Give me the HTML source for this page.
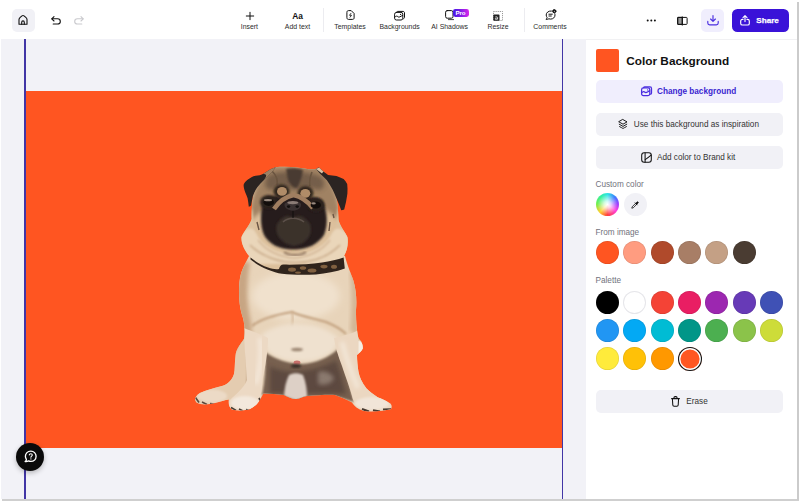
<!DOCTYPE html>
<html><head><meta charset="utf-8">
<style>
*{box-sizing:border-box;margin:0;padding:0}
html,body{width:800px;height:502px;overflow:hidden;background:#fff;font-family:"Liberation Sans",sans-serif;color:#1a1a1a}
#app{position:absolute;left:0;top:0;width:800px;height:502px;overflow:hidden;background:#fff}
.abs{position:absolute}
#top{left:0;top:0;width:800px;height:39px;background:#fff}
#canvas{left:1px;top:39px;width:585px;height:460px;background:#f2f2f7}
#orange{left:25.4px;top:91px;width:537px;height:357px;background:#ff5521}
.vline{width:1.5px;top:39px;height:461px;background:#4236a6}
#panel{left:586px;top:39px;width:212px;height:460px;background:#fff}
.tl{position:absolute;top:22.7px;width:80px;margin-left:-40px;text-align:center;font-size:6.9px;color:#2b2b2b;white-space:nowrap;line-height:8px}
.sep{position:absolute;top:8px;width:1px;height:24px;background:#ececf0}
.btn{position:absolute;left:595.5px;width:187px;height:23px;border-radius:5px;background:#f1f1f6;font-size:8.2px;color:#333;white-space:nowrap}
.btn span{position:absolute;top:7px;line-height:9px}
.lbl{position:absolute;left:595.5px;font-size:8.2px;color:#72727c;line-height:9px;white-space:nowrap}
.sw{position:absolute;width:23px;height:23px;border-radius:50%;box-shadow:inset 0 0 0 0.7px rgba(0,0,0,0.10)}
svg{position:absolute;overflow:visible}
</style></head><body>
<div id="app">
<div id="top" class="abs"></div>
<div id="canvas" class="abs"></div>
<div id="orange" class="abs"></div>
<div class="abs vline" style="left:24.4px"></div>
<div class="abs vline" style="left:561.8px"></div>
<div id="panel" class="abs"></div>
<div class="abs" style="left:586px;top:38.6px;width:211px;height:1px;background:#f1f1f3"></div>
<!-- frame borders -->
<div class="abs" style="left:2px;top:498.5px;width:797px;height:2px;background:#cfcfcf"></div>
<div class="abs" style="left:797px;top:2px;width:1.6px;height:498px;background:#cbcbcb"></div>

<!-- TOPBAR -->
<div class="abs" style="left:11.5px;top:9px;width:23px;height:23px;border-radius:5px;background:#f1f1f6"></div>
<svg style="left:18px;top:15.3px" width="10" height="10" viewBox="0 0 10 10" fill="none" stroke="#111" stroke-width="1.1" stroke-linecap="round" stroke-linejoin="round"><path d="M1 9.2V4.6C1 3.6 1.5 3 2.2 2.4L4 0.9C4.6 0.4 5.4 0.4 6 0.9L7.8 2.4C8.5 3 9 3.6 9 4.6V9.2Z"/><path d="M3.7 9.2V7.2C3.7 6.4 4.2 5.9 5 5.9C5.8 5.9 6.3 6.4 6.3 7.2V9.2"/></svg>
<svg style="left:51px;top:16px" width="10" height="9" viewBox="0 0 10 9" fill="none" stroke="#111" stroke-width="1.1" stroke-linecap="round" stroke-linejoin="round"><path d="M3 0.6L0.8 2.8L3 5"/><path d="M0.9 2.8H6.6C8.2 2.8 9.3 3.9 9.3 5.4C9.3 6.9 8.2 8 6.6 8H2.2"/></svg>
<svg style="left:74px;top:16px" width="10" height="9" viewBox="0 0 10 9" fill="none" stroke="#c9c9cd" stroke-width="1.1" stroke-linecap="round" stroke-linejoin="round"><path d="M7 0.6L9.2 2.8L7 5"/><path d="M9.1 2.8H3.4C1.8 2.8 0.7 3.9 0.7 5.4C0.7 6.9 1.8 8 3.4 8H7.8"/></svg>

<!-- Insert -->
<svg style="left:245.5px;top:11.8px" width="8" height="8" viewBox="0 0 8 8" fill="none" stroke="#111" stroke-width="1" stroke-linecap="round"><path d="M4 0.3V7.7M0.3 4H7.7"/></svg>
<div class="tl" style="left:249.4px">Insert</div>
<!-- Add text -->
<div class="abs" style="left:277.5px;top:10.5px;width:40px;text-align:center;font-size:8.4px;font-weight:bold;color:#111;line-height:10px">Aa</div>
<div class="tl" style="left:297.5px">Add text</div>
<div class="sep" style="left:323px"></div>
<!-- Templates -->
<svg style="left:345.5px;top:10.4px" width="9" height="10" viewBox="0 0 9 10" fill="none" stroke="#111" stroke-width="1" stroke-linecap="round" stroke-linejoin="round"><path d="M0.9 2.1C0.9 1.2 1.5 0.6 2.4 0.6H5.2L8.1 3.5V7.9C8.1 8.8 7.5 9.4 6.6 9.4H2.4C1.5 9.4 0.9 8.8 0.9 7.9Z"/><path d="M4.9 3.4L3.5 5.3H5.5L4.1 7.2" stroke-width="0.85"/></svg>
<div class="tl" style="left:350px">Templates</div>
<!-- Backgrounds -->
<svg style="left:394.3px;top:10.8px" width="11" height="10" viewBox="0 0 11 10" fill="none" stroke="#111" stroke-width="1" stroke-linecap="round" stroke-linejoin="round"><rect x="0.6" y="1.4" width="8.2" height="7.6" rx="1.8"/><path d="M2.6 1.2C2.8 0.6 3.3 0.4 3.9 0.4H9C9.9 0.4 10.5 1 10.5 1.9V6.4C10.5 7 10.2 7.5 9.6 7.7"/><path d="M0.8 6.2C2 4.8 3 4.8 4 5.8C5 6.8 6.4 5.4 8.6 4.4" /><circle cx="6.6" cy="3.4" r="0.6" fill="#111" stroke="none"/></svg>
<div class="tl" style="left:399.6px">Backgrounds</div>
<!-- AI Shadows -->
<svg style="left:444.5px;top:10.4px" width="10" height="11" viewBox="0 0 10 11" fill="none" stroke="#111" stroke-width="1" stroke-linecap="round" stroke-linejoin="round"><rect x="0.6" y="0.6" width="7.4" height="7.6" rx="1.6"/><path d="M3.4 9.6H8.6" stroke="#444"/></svg>
<div class="abs" style="left:452.5px;top:9px;width:16px;height:8.4px;border-radius:2.4px;background:linear-gradient(90deg,#4318e6 0%,#7a1ce6 45%,#d628ea 100%);color:#fff;font-size:6.2px;font-weight:bold;line-height:8.4px;text-align:center;letter-spacing:-0.1px">Pro</div>
<div class="tl" style="left:449.6px">AI Shadows</div>
<!-- Resize -->
<svg style="left:492.6px;top:10.6px" width="10" height="10" viewBox="0 0 10 10" fill="none"><rect x="0.5" y="0.5" width="9" height="9" stroke="#777" stroke-width="0.8" stroke-dasharray="1.1 1"/><rect x="0.3" y="3.6" width="6.2" height="6.2" rx="0.8" fill="#222"/><path d="M2.2 6.1C2.8 5.6 4.4 5.5 4.6 6.4V8.4M4.6 7.1C3.4 7 2.2 7.2 2.2 7.9C2.2 8.7 3.8 8.6 4.6 7.8" stroke="#fff" stroke-width="0.7" fill="none"/></svg>
<div class="tl" style="left:498px">Resize</div>
<div class="sep" style="left:524px"></div>
<!-- Comments -->
<svg style="left:544.8px;top:9.2px" width="12" height="11" viewBox="0 0 12 11" fill="none" stroke="#111" stroke-width="1" stroke-linecap="round" stroke-linejoin="round"><path d="M6.4 2C3.4 1.7 1.2 3.6 1.2 6C1.2 7 1.6 7.8 2.1 8.5C2.2 9.1 1.7 9.8 0.9 10.3C2.2 10.5 3.2 10.2 3.9 9.8C4.5 10 5 10.1 5.6 10.1C8.2 10.1 10 8.3 10 6C10 5.5 9.9 5.1 9.8 4.7"/><path d="M3.9 5.2H7.3M3.9 7H6.3"/><circle cx="9.3" cy="2.2" r="1.6" fill="#111"/><circle cx="9.3" cy="2.2" r="0.5" fill="#fff" stroke="none"/></svg>
<div class="tl" style="left:550px">Comments</div>
<!-- dots -->
<svg style="left:646px;top:19px" width="11" height="3" viewBox="0 0 11 3"><circle cx="1.7" cy="1.4" r="1" fill="#111"/><circle cx="5.3" cy="1.4" r="1" fill="#111"/><circle cx="8.9" cy="1.4" r="1" fill="#111"/></svg>
<!-- compare -->
<svg style="left:676.5px;top:15.6px" width="11" height="10" viewBox="0 0 11 10" fill="none" stroke="#111" stroke-width="1" stroke-linejoin="round"><rect x="0.7" y="1.4" width="4.6" height="7" fill="#9a9a9a"/><rect x="0.7" y="1.4" width="9.4" height="7" rx="0.8"/><path d="M5.3 0.5V9.4" stroke-width="1.1"/></svg>
<!-- download -->
<div class="abs" style="left:701px;top:9px;width:23px;height:23px;border-radius:5px;background:#f0eefd"></div>
<svg style="left:706.8px;top:15.4px" width="12" height="11" viewBox="0 0 12 11" fill="none" stroke="#4a2ee0" stroke-width="1.15" stroke-linecap="round" stroke-linejoin="round"><path d="M6 0.6V6.2M3.6 4L6 6.4L8.4 4"/><path d="M0.8 6.4V8C0.8 9.2 1.5 9.9 2.7 9.9H9.3C10.5 9.9 11.2 9.2 11.2 8V6.4"/></svg>
<!-- share -->
<div class="abs" style="left:731.5px;top:9px;width:57px;height:23px;border-radius:5.5px;background:#3a12d8"></div>
<svg style="left:740px;top:15.2px" width="10" height="11" viewBox="0 0 10 11" fill="none" stroke="#fff" stroke-width="1.15" stroke-linecap="round" stroke-linejoin="round"><path d="M5 0.8V6.6M3 2.6L5 0.7L7 2.6"/><path d="M3 4.4H2.4C1.4 4.4 0.7 5 0.7 6V8.4C0.7 9.4 1.4 10 2.4 10H7.6C8.6 10 9.3 9.4 9.3 8.4V6C9.3 5 8.6 4.4 7.6 4.4H7"/></svg>
<div class="abs" style="left:756.3px;top:15.5px;font-size:8.1px;font-weight:bold;color:#fff;line-height:10px;-webkit-text-stroke:0.25px #fff">Share</div>

<!-- RIGHT PANEL -->
<div class="abs" style="left:595.7px;top:49.2px;width:23.2px;height:23px;border-radius:2px;background:#ff5521"></div>
<div class="abs" style="left:626.3px;top:53.6px;font-size:11.8px;font-weight:bold;color:#111;white-space:nowrap;line-height:14px">Color Background</div>

<div class="btn" style="top:79.5px;background:#f0eefd;color:#3a1fd0;font-weight:bold"><span style="left:61.5px">Change background</span></div>
<svg style="left:640.6px;top:86px" width="11" height="11" viewBox="0 0 11 10" fill="none" stroke="#4a2ee0" stroke-width="1.25" stroke-linecap="round" stroke-linejoin="round"><rect x="0.6" y="1.4" width="8.2" height="7.6" rx="1.8"/><path d="M2.6 1.2C2.8 0.6 3.3 0.4 3.9 0.4H9C9.9 0.4 10.5 1 10.5 1.9V6.4C10.5 7 10.2 7.5 9.6 7.7"/><path d="M0.8 6.2C2 4.8 3 4.8 4 5.8C5 6.8 6.4 5.4 8.6 4.4"/><circle cx="6.6" cy="3.4" r="0.6" fill="#4a2ee0" stroke="none"/></svg>

<div class="btn" style="top:112.5px"><span style="left:38.3px">Use this background as inspiration</span></div>
<svg style="left:618px;top:119px" width="10" height="10" viewBox="0 0 10 10" fill="none" stroke="#111" stroke-width="0.95" stroke-linecap="round" stroke-linejoin="round"><path d="M5 0.6L9 2.9L5 5.2L1 2.9Z"/><path d="M1.2 5.2L5 7.4L8.8 5.2"/><path d="M1.6 7.6L5 9.5L8.4 7.6" stroke-dasharray="1.2 1"/></svg>

<div class="btn" style="top:145.5px"><span style="left:61.5px">Add color to Brand kit</span></div>
<svg style="left:641.2px;top:151.6px" width="11" height="11" viewBox="0 0 11 11" fill="none" stroke="#111" stroke-width="1.05" stroke-linecap="round" stroke-linejoin="round"><rect x="0.7" y="0.8" width="9.6" height="9.4" rx="2.4"/><path d="M4.1 0.9V10.1"/><path d="M4.2 7.6C6 6.6 8 5 10.1 3.2"/></svg>

<div class="lbl" style="top:179.9px">Custom color</div>
<div class="sw" style="left:595.5px;top:193.4px;box-shadow:none;background:radial-gradient(circle at 50% 50%,#fff 0%,rgba(255,255,255,0.75) 22%,rgba(255,255,255,0) 62%),conic-gradient(from 0deg,#30e4e4 0deg,#3c7cff 45deg,#9a40ff 85deg,#ff40e0 125deg,#ff4040 180deg,#ffd030 225deg,#70f050 275deg,#30f0a0 320deg,#30e4e4 360deg)"></div>
<div class="sw" style="left:623.7px;top:193.4px;box-shadow:none;background:#f1f1f6"></div>
<svg style="left:630.8px;top:201.2px" width="8" height="8" viewBox="0 0 9 9" fill="none" stroke="#111" stroke-width="0.9" stroke-linecap="round" stroke-linejoin="round"><path d="M5.2 2.6L1.3 6.5L0.9 8.1L2.5 7.7L6.4 3.8"/><path d="M4.6 2L7 4.4" /><path d="M5.6 3C6 1.6 7 0.6 7.9 1.1C8.8 1.8 7.6 3 6.2 3.6Z" fill="#111"/></svg>

<div class="lbl" style="top:228px">From image</div>
<div class="sw" style="left:595.5px;top:241.4px;background:#ff5521"></div>
<div class="sw" style="left:623.2px;top:241.4px;background:#ff9c80"></div>
<div class="sw" style="left:650.5px;top:241.4px;background:#b04a2b"></div>
<div class="sw" style="left:678px;top:241.4px;background:#a87e66"></div>
<div class="sw" style="left:705px;top:241.4px;background:#c4a085"></div>
<div class="sw" style="left:732.5px;top:241.4px;background:#4a3c32"></div>

<div class="lbl" style="top:276.3px">Palette</div>
<div class="sw" style="left:595.5px;top:290.6px;background:#000"></div>
<div class="sw" style="left:623.2px;top:290.6px;background:#fff;box-shadow:inset 0 0 0 1px #e6e6ea"></div>
<div class="sw" style="left:650.5px;top:290.6px;background:#f44336"></div>
<div class="sw" style="left:678px;top:290.6px;background:#e91e63"></div>
<div class="sw" style="left:705px;top:290.6px;background:#9c27b0"></div>
<div class="sw" style="left:732.5px;top:290.6px;background:#673ab7"></div>
<div class="sw" style="left:760px;top:290.6px;background:#3f51b5"></div>

<div class="sw" style="left:595.5px;top:318.8px;background:#2196f3"></div>
<div class="sw" style="left:623.2px;top:318.8px;background:#03a9f4"></div>
<div class="sw" style="left:650.5px;top:318.8px;background:#00bcd4"></div>
<div class="sw" style="left:678px;top:318.8px;background:#009688"></div>
<div class="sw" style="left:705px;top:318.8px;background:#4caf50"></div>
<div class="sw" style="left:732.5px;top:318.8px;background:#8bc34a"></div>
<div class="sw" style="left:760px;top:318.8px;background:#cddc39"></div>

<div class="sw" style="left:595.5px;top:347px;background:#ffeb3b"></div>
<div class="sw" style="left:623.2px;top:347px;background:#ffc107"></div>
<div class="sw" style="left:650.5px;top:347px;background:#ff9800"></div>
<div class="sw" style="left:677.5px;top:346.5px;width:24px;height:24px;background:#ff5722;box-shadow:inset 0 0 0 1.1px #111,inset 0 0 0 2.4px #fff"></div>

<div class="btn" style="top:389.5px"><span style="left:90.8px">Erase</span></div>
<svg style="left:670.5px;top:395.6px" width="9" height="11" viewBox="0 0 9 11" fill="none" stroke="#111" stroke-width="1.05" stroke-linecap="round" stroke-linejoin="round"><path d="M0.6 2.6H8.4"/><path d="M3 2.4V1.6C3 1 3.4 0.6 4 0.6H5C5.6 0.6 6 1 6 1.6V2.4"/><path d="M1.4 2.8L1.8 9C1.85 9.8 2.3 10.3 3.1 10.3H5.9C6.7 10.3 7.15 9.8 7.2 9L7.6 2.8"/></svg>

<!-- help button -->
<div class="abs" style="left:16px;top:443.2px;width:28px;height:28px;border-radius:50%;background:#0a0a0a;box-shadow:0 2px 5px rgba(0,0,0,0.25)"></div>
<svg style="left:23.6px;top:450.4px" width="13" height="13" viewBox="0 0 13 13" fill="none" stroke="#fff" stroke-width="1.35" stroke-linecap="round" stroke-linejoin="round"><path d="M6.8 1.1C3.7 1.1 1.4 3.4 1.4 6.3C1.4 7.5 1.8 8.5 2.4 9.3C2.5 10 2 10.9 1.1 11.5C2.6 11.7 3.7 11.4 4.5 10.9C5.2 11.2 6 11.4 6.8 11.4C9.8 11.4 12.1 9.2 12.1 6.3C12.1 3.4 9.8 1.1 6.8 1.1Z"/><path d="M5.3 4.9C5.4 4.1 6 3.7 6.8 3.7C7.7 3.7 8.3 4.3 8.3 5C8.3 6.1 6.9 6.2 6.9 7.3" stroke-width="1.1"/><circle cx="6.9" cy="8.9" r="0.65" fill="#fff" stroke="none"/></svg>

<!-- PUG placeholder -->
<svg id="pug" style="left:0;top:0" width="800" height="502" viewBox="0 0 800 502"><defs>
<filter id="b1" x="-20%" y="-20%" width="140%" height="140%"><feGaussianBlur stdDeviation="1"/></filter>
<filter id="b2" x="-20%" y="-20%" width="140%" height="140%"><feGaussianBlur stdDeviation="2"/></filter>
<filter id="b3" x="-30%" y="-30%" width="160%" height="160%"><feGaussianBlur stdDeviation="3.5"/></filter>
<filter id="b05" x="-20%" y="-20%" width="140%" height="140%"><feGaussianBlur stdDeviation="0.5"/></filter>
<path id="bodyP" d="M250,254 L244,266 C240,274 239,282 239,292 C239,304 241,312 243,318 C245,326 245,334 244,339 C240,345 236,349 235.5,356 C234.5,364 235,370 234,374 C232,380 228,384 222,386 C214,388 206,390 200,393 C195,396 194,400 196.5,402.5 C200,405 208,405 215,403 C220,401.5 225,400 229,399.5 C228,403 229,407 232,409.5 C238,411 246,410.5 250,409 C256,406 260,401 262,396 L263.5,393.5 C270,394 278,394 284,395 C288,397 292,399 296,399 C300,398.5 303,396.5 307,396 C316,395.5 328,394.5 335,395 C341,397 347,400 352,402.5 C354,406 358,409.5 364,411 C372,412 384,411 391,409 C392.5,406.5 391.5,404 389.5,403 C385,400 381,398.5 378,397.5 C373,394 369,391 366.5,388.5 C362,383 359.5,377 358.5,372 C357.5,366 357,360 357,355 C359,353 362,351 362.8,348.5 C363,345.5 362,343 361,341 C358.5,339 357.5,336 357,330 C356,322 356,316 356,310 C357,300 356,290 353.5,281 C351,273 348,268 345,256 Z"/>
<clipPath id="bodyC"><use href="#bodyP"/></clipPath>
<path id="headP" d="M275.7,167.2 C282,166.6 290,166.8 297,167.4 C303,168 310,170 316,169 C319,168 321,170 324,172 C330,178 334,188 336.5,198 C338,204 338,212 338.5,220 C340,226 345,232 347.4,237 C348.5,243 347.5,250 344,256 C342,262 338,268 330,270 C316,274 300,275 286,272 C272,270 258,266 250,257 C244,250 241,243 241.5,237 C244,231 250,225 251.7,219 C251.5,212 252,204 252.9,196 C255,186 262,176 270,170 Z"/>
<clipPath id="headC"><use href="#headP"/></clipPath>
</defs>
<!-- BODY -->
<use href="#bodyP" fill="#e8d4ba"/>
<g clip-path="url(#bodyC)">
  <!-- left-side shading -->
  <path d="M238,262 L250,262 C246,285 247,305 251,322 C253,332 250,342 246,350 L232,352 Z" fill="#c7a583" filter="url(#b2)"/>
  <path d="M358,270 L350,272 C352,290 352,310 350,330 L360,340 Z" fill="#d2b595" filter="url(#b2)"/>
  <!-- chest highlight -->
  <ellipse cx="296" cy="296" rx="44" ry="24" fill="#f0e1cd" filter="url(#b3)"/>
  <!-- chest fold lines -->
  <path d="M252,326 C262,318 280,314 292,312 C300,316 312,318 326,322 C336,326 342,330 346,334" fill="none" stroke="#c2a07e" stroke-width="2.2" filter="url(#b1)"/>
  <path d="M292,312 C294,320 292,328 290,334" fill="none" stroke="#cfb090" stroke-width="1.5" filter="url(#b1)"/>
  <!-- hind left haunch -->
  <path d="M243,336 C238,344 235,352 234.5,362 C234,370 233,378 228,383 C218,387 206,390 198,394 L194,400 L198,404 L232,400 L246,392 C248,376 248,356 246,338 Z" fill="#e4ccb0" filter="url(#b1)"/>
  <path d="M246,342 C248,356 249,372 247,388" fill="none" stroke="#b99a7a" stroke-width="2" filter="url(#b1)"/>
  <ellipse cx="212" cy="396" rx="15" ry="6.5" fill="#ecdac6" filter="url(#b1)"/>
  <!-- lower belly light (fluffy) -->
  <path d="M262,334 C274,326 290,322 300,324 C316,324 330,330 338,338 C338,346 334,352 326,356 C316,361 306,362 298,361 C288,362 276,358 268,352 C264,346 262,340 262,334 Z" fill="#efe1cf" filter="url(#b2)"/>
  <ellipse cx="297" cy="349.5" rx="6" ry="1.8" fill="#9b8672" filter="url(#b1)"/>
  <!-- belly dark -->
  <path d="M265,352 C276,360 290,364 302,364 C316,363 328,358 338,349 C344,362 348,380 354,402 L335,396 L307,397 L296,400 L284,396 L262,395 C265,380 266,366 265,352 Z" fill="#77614f" filter="url(#b1)"/>
  <path d="M270,366 C280,372 292,372 300,371 C314,370 326,366 336,360 C340,370 343,382 346,394 L270,393 Z" fill="#55433a" filter="url(#b2)" opacity="0.75"/>
  <path d="M318,372 C324,370 330,372 334,378 C332,384 324,386 318,384 Z" fill="#96867a" filter="url(#b2)" opacity="0.8"/>
  <!-- center lighter patch -->
  <path d="M289,375 C293,372.5 299,372.5 303,375 C306,382 307,390 307,397 L296,400.5 L284,396 C284.5,388 286,381 289,375 Z" fill="#ddd0c6" filter="url(#b1)"/>
  <ellipse cx="297" cy="362.6" rx="3.4" ry="2" fill="#c7706a" filter="url(#b05)"/>
  <ellipse cx="296" cy="366" rx="5" ry="2" fill="#3d302a" filter="url(#b1)"/>
  <!-- front left leg -->
  <path d="M244,328 C250,331 262,334 268,338 C268,352 265,368 262.5,380 C262,388 261,396 259,402 C256,407 251,410 246,410.5 L232,410.5 C228,408 228,404 230,400 C236,394 244,388 247,380 C246,364 244,346 244,328 Z" fill="#ecd9c4" filter="url(#b05)"/>
  <path d="M260,338 C262,354 260,370 256,384" fill="none" stroke="#f4e8da" stroke-width="4.5" filter="url(#b2)"/>
  <!-- front right leg -->
  <path d="M334,338 C342,336 352,334 358,330 C358,344 359,356 360,366 C361,374 364,382 372,392 C378,397 385,401 391,405 L391,410 L366,411.5 C358,409 353,402 352,396 C350,388 346,378 342,366 C338,356 335,346 334,338 Z" fill="#ebd7c1" filter="url(#b05)"/>
  <path d="M342,342 C346,358 352,374 358,388" fill="none" stroke="#f3e7d8" stroke-width="4.5" filter="url(#b2)"/>
  <!-- tail bump -->
  <path d="M358.5,341 C362,341.5 364,345 363.5,349 C363,352 361,354 358.5,355.5 Z" fill="#f5ede2"/>
  <!-- paws -->
  <ellipse cx="245" cy="403" rx="14" ry="7" fill="#f3e8dc" filter="url(#b1)"/>
  <ellipse cx="372" cy="403.5" rx="17" ry="6.5" fill="#f1e5d8" filter="url(#b1)"/>
  <!-- claws -->
  <path d="M231,407.5 L236,410.5 M239,409 L243,411 M246,409.5 L251,410.5 M259,398 L261,402" stroke="#463a32" stroke-width="1.7" filter="url(#b05)"/>
  <path d="M362,409 L369,411.5 M373,410.2 L380,411.6 M383,409.5 L391,409.2" stroke="#463a32" stroke-width="2" filter="url(#b05)"/>
  <path d="M195.5,397.5 L199,402.5 M202,402 L207,404.5 M210,403.5 L215,404" stroke="#5a4a3e" stroke-width="1.6" filter="url(#b05)"/>
</g>
<!-- HEAD -->
<use href="#headP" fill="#dcc09c"/>
<g clip-path="url(#headC)">
  <!-- upper head tan -->
  <path d="M250,222 C250,195 258,178 272,166 L320,166 C332,180 340,198 340,222 C330,210 310,200 294,200 C278,200 260,210 250,222 Z" fill="#a08263" filter="url(#b2)"/>
  <!-- forehead darker mottling -->
  <path d="M268,176 C276,170 312,170 322,178 C326,184 324,190 318,190 C310,186 300,188 294,190 C288,188 278,186 270,190 C264,188 264,182 268,176 Z" fill="#6f5a47" filter="url(#b2)" opacity="0.9"/>
  <path d="M286,169 C291,167.5 298,168 303,170 C302,177 300,183 297,188 C293,188 290,184 288,180 Z" fill="#4a3a30" filter="url(#b1)"/>
  <path d="M272,171 C276,175 278,180 277,185 M312,172 C310,177 309,181 310,186" stroke="#6a543f" stroke-width="1.6" fill="none" filter="url(#b05)"/>
  <!-- cheeks sides lighter -->
  <path d="M252,208 C254,218 254,230 258,242 L244,242 L246,222 Z" fill="#dcc2a0" filter="url(#b1)"/>
  <path d="M338,208 C336,218 336,230 332,242 L348,242 L344,222 Z" fill="#dcc2a0" filter="url(#b1)"/>
  <!-- muzzle mask -->
  <path d="M262,207 C263,199 270,195 278,196.5 C284,198 288,196 294,195 C300,196 304,198 310,197.5 C318,196 324,200 325,208 C327.5,216 327.5,227 324,235 C318,244 308,249.5 293.5,249.5 C279,249.5 269,244 264,235 C260.5,227 260.5,216 262,207 Z" fill="#261f1d" filter="url(#b1)"/>
  <!-- dark rings round brow spots -->
  <ellipse cx="281.5" cy="191.5" rx="8" ry="7" fill="#30261f" filter="url(#b1)"/>
  <ellipse cx="305.5" cy="193" rx="8" ry="7" fill="#30261f" filter="url(#b1)"/>
  <!-- brow spots -->
  <ellipse cx="282" cy="191.4" rx="5" ry="4.4" fill="#b08c68" filter="url(#b05)"/>
  <ellipse cx="305.3" cy="193.3" rx="5" ry="4.4" fill="#b08c68" filter="url(#b05)"/>
  <!-- eye patches -->
  <ellipse cx="268.5" cy="202" rx="8.5" ry="7" fill="#2a211c" filter="url(#b1)"/>
  <ellipse cx="316" cy="205" rx="8.5" ry="7" fill="#2a211c" filter="url(#b1)"/>
  <!-- nose arch (tan) -->
  <path d="M274,209 C278,203 284,197 293.5,195 C303,197 309,203 313,208" stroke="#a07e60" stroke-width="4.6" fill="none" filter="url(#b05)"/>
  <!-- nose -->
  <path d="M284.5,204 C286,200.5 301,200.5 301,204 C301.5,208 298,210.5 293,210.5 C288,210.5 284,208 284.5,204 Z" fill="#3b3232"/>
  <ellipse cx="292.8" cy="202.6" rx="5.5" ry="1.6" fill="#8b7b76" filter="url(#b05)"/>
  <ellipse cx="288.6" cy="206.6" rx="1.7" ry="1.4" fill="#120e0d"/>
  <ellipse cx="297.2" cy="206.6" rx="1.7" ry="1.4" fill="#120e0d"/>
  <!-- lip / chin -->
  <path d="M277,224 C282,216 288,214 293,218 C298,214 305,216 310,224 C313,234 308,244 294,246 C281,244 274,234 277,224 Z" fill="#3a302c" filter="url(#b1)"/>
  <path d="M283,222 C288,217 298,217 304,222" stroke="#5c5049" stroke-width="1.6" fill="none" filter="url(#b05)"/>
  <path d="M293,211 L293,218" stroke="#0f0c0b" stroke-width="1"/>
  <!-- eyes -->
  <ellipse cx="268.7" cy="202.3" rx="5.2" ry="3.6" fill="#120d0b"/>
  <ellipse cx="315.8" cy="205" rx="5.2" ry="3.6" fill="#120d0b"/>
  <ellipse cx="268" cy="200.2" rx="4" ry="1.1" fill="#9b8b80" filter="url(#b05)"/>
  <ellipse cx="313.6" cy="203.4" rx="2.2" ry="1.1" fill="#9b8b80" filter="url(#b05)"/>
  <!-- freckles on cheeks -->
  <path d="M257,222 L259,230 M330,222 L329,231 M333,214 L334,218" stroke="#6b5544" stroke-width="1.4" filter="url(#b05)"/>
  <!-- ruff -->
  <path d="M240,236 C245,229 252,225 256,233 C262,246 276,253.5 294,254.5 C312,253.5 326,246 332,233 C336,225 344,229 349,237 L349,264 L240,264 Z" fill="#ead6ba" filter="url(#b1)"/>
  <path d="M250,245 C262,257 280,262.5 296,262.5 C312,262.5 328,257 340,245" stroke="#c9ab8a" stroke-width="1.6" fill="none" filter="url(#b1)"/>
  <path d="M258,240 C266,251 280,257 294,258 C308,257 322,251 330,240" stroke="#d2b595" stroke-width="1.4" fill="none" filter="url(#b1)"/>
  <path d="M284,252 C290,256 300,256 306,252" stroke="#8a6e58" stroke-width="2" fill="none" filter="url(#b1)"/>
</g>
<!-- collar -->
<path d="M250.5,257.6 C256,262 262,265.4 268,267.6 C272,269 276,269.6 279,269 C279.6,266.6 281,264.6 283.5,264.6 C296,265 310,264 322,262.4 C330,261.4 338,259.6 343.6,257.6 L344.8,268.6 C336,271.8 326,273.8 316,274.4 C304,275 292,274.8 282,273.8 C272,272 260,267 250.5,259.6 Z" fill="#30241c"/>
<g filter="url(#b05)" fill="#80603f">
<ellipse cx="292" cy="269.6" rx="4" ry="2.2"/><ellipse cx="303" cy="268" rx="3.2" ry="1.8"/><ellipse cx="312" cy="270.4" rx="4.4" ry="2"/><ellipse cx="324" cy="266.6" rx="3.6" ry="1.8"/><ellipse cx="334" cy="266.8" rx="3" ry="2"/><ellipse cx="298" cy="272.6" rx="3" ry="1.2"/>
</g>
<!-- ears -->
<path d="M275.7,167.2 C274,168 272,168.5 270.9,169 C268,171 264,173.5 261.9,174.4 C259,175.5 256,175.5 254.1,176.1 C251,177.5 248.5,179 247,180.3 C245,182 243.8,183.6 243.6,185.1 C243.6,188 244.6,190.4 245.2,192.3 C246,194.4 247,196.4 247.6,198.3 C248.2,201 248.4,204 248.8,206.7 C249.8,206.5 250.4,206 251.1,205.5 C251.6,202 252.3,199 252.9,195.9 C254,193 255.4,190 257.1,187.5 C259,185 261.4,182.6 263.7,180.3 C266.6,177.4 269.4,174.6 272.1,172 Z" fill="#2b2422"/>
<path d="M275.7,167.2 L270.9,169 L263,174 C266,174 268,175 263.7,180.3 L272.1,172 Z" fill="#9c8064"/>
<path d="M316.1,169 C317,168 318,167.4 319.1,167.4 C320.6,168.6 322,170 323.3,171.4 C325,172.6 326.6,173.8 328.1,175 C330.8,175.5 333.6,175.6 336.4,176.1 C339,177 341.4,178 343.6,179.1 C345,180.6 346.2,182.2 347.2,183.9 C347.6,187 347.6,190.2 347.4,193.5 C347,196.4 346.5,199.2 346,201.9 C345.4,204.5 344.8,207 344.2,209.6 C343.2,210 342.2,210.2 341.2,210.2 C340.6,208.6 340,207 339.4,205.5 C338.4,203 337.4,200.6 336.4,198.3 C335.2,195.4 334,192.6 332.8,189.9 C331,186.6 329,183.4 326.9,180.3 C324.6,177.8 322.2,175.4 319.7,173.2 Z" fill="#2b2422"/>
<path d="M316.1,169 L319.1,167.4 L323.3,171.4 L322,173.5 Z" fill="#d9c3a6"/>
</svg>
</div>
</body></html>
